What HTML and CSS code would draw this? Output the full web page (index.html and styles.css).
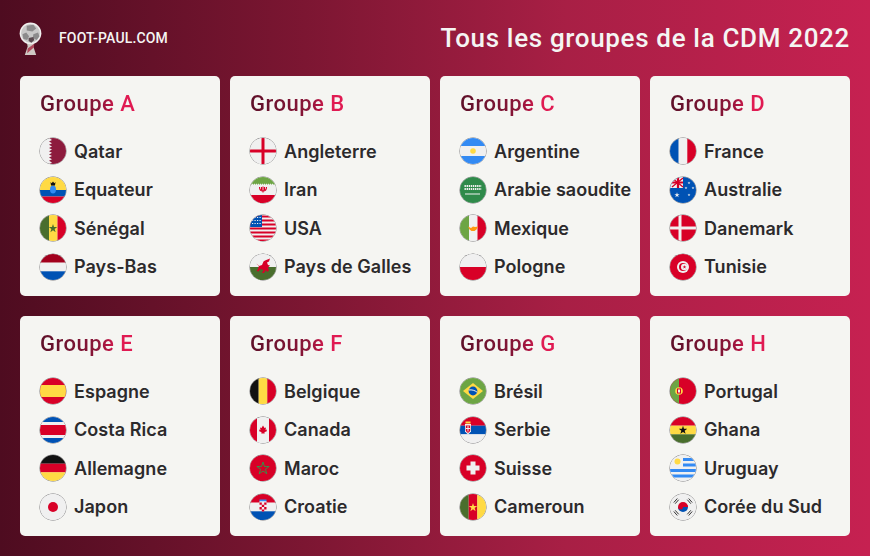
FILE: index.html
```html
<!DOCTYPE html>
<html lang="fr">
	<head>
		<title>Tous les groupes de la CDM 2022</title>
		<meta charset="UTF-8">
		<meta content="width=device-width,initial-scale=1.0" name="viewport">
		<link rel="stylesheet" href="styles.css">
	</head>
	<body>
		<svg class="sprite" aria-hidden="true"><defs>
			<polygon id="star" points="0,-1 .225,-.309 .951,-.309 .363,.118 .588,.809 0,.382 -.588,.809 -.363,.118 -.951,-.309 -.225,-.309"/>
		</defs></svg>
		<div id="page">
			<header class="top">
				<div class="brand">
					<svg class="logo" viewBox="0 0 24 36">
						<path d="M8 21h8l-1 5 3 9H6l3-9z" fill="#cfc9c4"/>
						<path d="M9 28l7-5-.5 4-7 6z" fill="#b04a5c"/>
						<circle cx="12" cy="12" r="11.500" fill="#f1f0ef"/>
						<circle cx="12" cy="12" r="10" fill="#c9c8c8"/>
						<path d="M8 4l7-1 3 4-4 3-6-1zM3.500 13l4-2 3 4-2 4-4-1zM15 13l5-2 1.500 4-3 4-4-2z" fill="#8c8b8c"/>
						<path d="M10 17l5-1 1 3-3 3-3-2z" fill="#5a4a50"/>
					</svg>
					<span class="site">FOOT-PAUL.COM</span>
				</div>
				<h1 class="headline">Tous les groupes de la CDM 2022</h1>
			</header>
			<main class="groups">
				<section class="card">
					<h2 class="title">Groupe A</h2>
					<ul class="teams">
						<li class="team"><svg class="flag" viewBox="0 0 26 26"><rect width="26" height="26" fill="#f0f0f0"/><path d="M9 0h17v26H9l3-1.600-3-1.600 3-1.600-3-1.600 3-1.600-3-1.600 3-1.600-3-1.600 3-1.600-3-1.600 3-1.600-3-1.600 3-1.600-3-1.600 3-1.600z" fill="#8d1b3d"/></svg>Qatar</li>
						<li class="team"><svg class="flag" viewBox="0 0 26 26"><rect width="26" height="13" fill="#ffda44"/><rect y="13" width="26" height="6.500" fill="#0052b4"/><rect y="19.500" width="26" height="6.500" fill="#d80027"/><ellipse cx="13" cy="12.500" rx="3" ry="4" fill="#338af3"/><path d="M10.500 5l1.200 1.200L13 4.500l1.300 1.700L15.500 5 15 8.500h-4z" fill="#111"/></svg>Equateur</li>
						<li class="team"><svg class="flag" viewBox="0 0 26 26"><rect width="9" height="26" fill="#496e2d"/><rect x="9" width="8.500" height="26" fill="#ffda44"/><rect x="17.500" width="8.500" height="26" fill="#d80027"/><use href="#star" transform="translate(13 13.500) scale(4.500)" fill="#496e2d"/></svg>Sénégal</li>
						<li class="team"><svg class="flag" viewBox="0 0 26 26"><rect width="26" height="8.700" fill="#a2001d"/><rect y="8.700" width="26" height="8.700" fill="#f0f0f0"/><rect y="17.300" width="26" height="8.700" fill="#0052b4"/></svg>Pays-Bas</li>
					</ul>
				</section>
				<section class="card">
					<h2 class="title">Groupe B</h2>
					<ul class="teams">
						<li class="team"><svg class="flag" viewBox="0 0 26 26"><rect width="26" height="26" fill="#f0f0f0"/><path d="M11.500 0h3v11.500H26v3H14.500V26h-3V14.500H0v-3h11.500z" fill="#d80027"/></svg>Angleterre</li>
						<li class="team"><svg class="flag" viewBox="0 0 26 26"><rect width="26" height="26" fill="#f0f0f0"/><rect width="26" height="7.500" fill="#6da544"/><rect y="18" width="26" height="8" fill="#d80027"/><path d="M2 7.500h22" stroke="#f0f0f0" stroke-width="1.500" stroke-dasharray="1 1"/><path d="M9.500 10c0 3 1.500 4 3.500 4s3.500-1 3.500-4M11.500 10v3M14.500 10v3M13 9.500v6" fill="none" stroke="#d80027" stroke-width="1.100"/></svg>Iran</li>
						<li class="team"><svg class="flag" viewBox="0 0 26 26"><rect width="26" height="26" fill="#f0f0f0"/><path d="M0 1.500h26M0 5.500h26M0 9.500h26M0 13.500h26M0 17.500h26M0 21.500h26M0 25.500h26" stroke="#d80027" stroke-width="2"/><rect width="12" height="12" fill="#0052b4"/><path d="M2 2.500h9M2 5.500h9M2 8.500h9" stroke="#f0f0f0" stroke-width="1.200" stroke-dasharray="1.200 1.300"/></svg>USA</li>
						<li class="team"><svg class="flag" viewBox="0 0 26 26"><rect width="26" height="13" fill="#f0f0f0"/><rect y="13" width="26" height="13" fill="#496e2d"/><path d="M6 9.500l3 2.500 3-1 1.500-3.500L15 6.500l5-2-1 3-2 1 1 2.500 2 .5-2 2 1 3-2 1.500-1-2-2 3h-2l1.500-3-3-1-2 2.500-2-.5 1.500-2 1-3.500z" fill="#d80027"/></svg>Pays de Galles</li>
					</ul>
				</section>
				<section class="card">
					<h2 class="title">Groupe C</h2>
					<ul class="teams">
						<li class="team"><svg class="flag" viewBox="0 0 26 26"><rect width="26" height="26" fill="#f0f0f0"/><rect width="26" height="8" fill="#338af3"/><rect y="18" width="26" height="8" fill="#338af3"/><circle cx="13" cy="13" r="2.800" fill="#ffda44"/></svg>Argentine</li>
						<li class="team"><svg class="flag" viewBox="0 0 26 26"><rect width="26" height="26" fill="#2f8a4a"/><path d="M4.500 9h17M4.500 12h17" stroke="#f0f0f0" stroke-width="2.200" stroke-dasharray="1.400 .7"/><path d="M5 17h15" stroke="#f0f0f0" stroke-width="1"/></svg>Arabie saoudite</li>
						<li class="team"><svg class="flag" viewBox="0 0 26 26"><rect width="9" height="26" fill="#6da544"/><rect x="9" width="8.500" height="26" fill="#f0f0f0"/><rect x="17.500" width="8.500" height="26" fill="#d80027"/><path d="M8 11.500l3 1.500 2-1.500 2 .5 3-.5-1.500 3-2 1.500h-3l-2-1.500z" fill="#ff9811"/></svg>Mexique</li>
						<li class="team"><svg class="flag" viewBox="0 0 26 26"><rect width="26" height="13" fill="#f0f0f0"/><rect y="13" width="26" height="13" fill="#d80027"/></svg>Pologne</li>
					</ul>
				</section>
				<section class="card">
					<h2 class="title">Groupe D</h2>
					<ul class="teams">
						<li class="team"><svg class="flag" viewBox="0 0 26 26"><rect width="8.700" height="26" fill="#0052b4"/><rect x="8.700" width="8.700" height="26" fill="#f0f0f0"/><rect x="17.300" width="8.700" height="26" fill="#d80027"/></svg>France</li>
						<li class="team"><svg class="flag" viewBox="0 0 26 26"><rect width="26" height="26" fill="#0052b4"/><rect width="13" height="11" fill="#f0f0f0"/><path d="M2 1l11 9M13 1L2 10" stroke="#d80027" stroke-width="1.300"/><path d="M8 0v11M0 5.500h13" stroke="#d80027" stroke-width="2.200"/><use href="#star" transform="translate(7 18) scale(2.800)" fill="#f0f0f0"/><use href="#star" transform="translate(19 6) scale(1.500)" fill="#f0f0f0"/><use href="#star" transform="translate(23 11) scale(1.500)" fill="#f0f0f0"/><use href="#star" transform="translate(16 11) scale(1.500)" fill="#f0f0f0"/><use href="#star" transform="translate(19 18) scale(1.500)" fill="#f0f0f0"/></svg>Australie</li>
						<li class="team"><svg class="flag" viewBox="0 0 26 26"><rect width="26" height="26" fill="#d80027"/><path d="M10 0v26M0 13h26" stroke="#f0f0f0" stroke-width="3"/></svg>Danemark</li>
						<li class="team"><svg class="flag" viewBox="0 0 26 26"><rect width="26" height="26" fill="#d80027"/><circle cx="13" cy="13" r="6" fill="#f0f0f0"/><circle cx="13" cy="13" r="4" fill="#d80027"/><circle cx="14.200" cy="13" r="3.200" fill="#f0f0f0"/><use href="#star" transform="translate(14.500 13) scale(2)" fill="#d80027"/></svg>Tunisie</li>
					</ul>
				</section>
				<section class="card">
					<h2 class="title">Groupe E</h2>
					<ul class="teams">
						<li class="team"><svg class="flag" viewBox="0 0 26 26"><rect width="26" height="26" fill="#d80027"/><rect y="7" width="26" height="12" fill="#ffda44"/></svg>Espagne</li>
						<li class="team"><svg class="flag" viewBox="0 0 26 26"><rect width="26" height="26" fill="#f0f0f0"/><rect width="26" height="5" fill="#0052b4"/><rect y="8" width="26" height="10" fill="#d80027"/><rect y="21" width="26" height="5" fill="#0052b4"/></svg>Costa Rica</li>
						<li class="team"><svg class="flag" viewBox="0 0 26 26"><rect width="26" height="8.700" fill="#111"/><rect y="8.700" width="26" height="8.700" fill="#d80027"/><rect y="17.300" width="26" height="8.700" fill="#ffda44"/></svg>Allemagne</li>
						<li class="team"><svg class="flag" viewBox="0 0 26 26"><rect width="26" height="26" fill="#f0f0f0"/><circle cx="13" cy="13" r="5" fill="#d80027"/></svg>Japon</li>
					</ul>
				</section>
				<section class="card">
					<h2 class="title">Groupe F</h2>
					<ul class="teams">
						<li class="team"><svg class="flag" viewBox="0 0 26 26"><rect width="8.700" height="26" fill="#111"/><rect x="8.700" width="8.700" height="26" fill="#ffda44"/><rect x="17.300" width="8.700" height="26" fill="#d80027"/></svg>Belgique</li>
						<li class="team"><svg class="flag" viewBox="0 0 26 26"><rect width="26" height="26" fill="#f0f0f0"/><rect width="7" height="26" fill="#d80027"/><rect x="19" width="7" height="26" fill="#d80027"/><path d="M13 8.500l1.500 2.500 1.500-.5-.5 2.500 1.500-.5-.5 2-2 .5.200 1.500h-3.400l.2-1.500-2-.5-.5-2 1.500.5-.5-2.500 1.500.5z" fill="#d80027"/></svg>Canada</li>
						<li class="team"><svg class="flag" viewBox="0 0 26 26"><rect width="26" height="26" fill="#d80027"/><use href="#star" transform="translate(13 13.500) scale(6.500)" fill="none" stroke="#2a9a4a" stroke-width=".14"/></svg>Maroc</li>
						<li class="team"><svg class="flag" viewBox="0 0 26 26"><rect width="26" height="8.700" fill="#d80027"/><rect y="8.700" width="26" height="8.700" fill="#f0f0f0"/><rect y="17.300" width="26" height="8.700" fill="#0052b4"/><path d="M9.500 7h7v7.500l-3.500 3-3.500-3z" fill="#f0f0f0"/><path d="M9.500 8.500h2.300v2.300H9.500zM14.200 8.500h2.300v2.300h-2.300zM11.800 10.800h2.400v2.300h-2.400zM9.500 13.100h2.300v2.300H9.500zM14.200 13.100h2.300v2.300h-2.300zM11.800 15.400h2.400v2h-2.400z" fill="#d80027"/><path d="M9.500 5.500h7v1.800h-7z" fill="#338af3"/></svg>Croatie</li>
					</ul>
				</section>
				<section class="card">
					<h2 class="title">Groupe G</h2>
					<ul class="teams">
						<li class="team"><svg class="flag" viewBox="0 0 26 26"><rect width="26" height="26" fill="#6da544"/><path d="M13 5l10 8-10 8-10-8z" fill="#ffda44"/><circle cx="13" cy="13" r="4.400" fill="#0052b4"/><path d="M8.800 12c3-.5 6 .3 8.300 2.200" fill="none" stroke="#f0f0f0" stroke-width="1"/></svg>Brésil</li>
						<li class="team"><svg class="flag" viewBox="0 0 26 26"><rect width="26" height="8.700" fill="#d80027"/><rect y="8.700" width="26" height="8.700" fill="#0052b4"/><rect y="17.300" width="26" height="8.700" fill="#f0f0f0"/><path d="M5 7h6v7.500l-3 3-3-3z" fill="#f0f0f0"/><path d="M5.800 8.500h4.400v5.500L8 16l-2.200-2z" fill="#d80027"/><path d="M8 9v5.500M6 11.500h4" stroke="#f0f0f0" stroke-width="1"/><path d="M5.500 4.500h5V6.500h-5z" fill="#ffda44"/></svg>Serbie</li>
						<li class="team"><svg class="flag" viewBox="0 0 26 26"><rect width="26" height="26" fill="#d80027"/><path d="M10.500 6.500h5v4h4v5h-4v4h-5v-4h-4v-5h4z" fill="#f0f0f0"/></svg>Suisse</li>
						<li class="team"><svg class="flag" viewBox="0 0 26 26"><rect width="8.700" height="26" fill="#496e2d"/><rect x="8.700" width="8.700" height="26" fill="#d80027"/><rect x="17.300" width="8.700" height="26" fill="#ffda44"/><use href="#star" transform="translate(13 13.500) scale(4.500)" fill="#ffda44"/></svg>Cameroun</li>
					</ul>
				</section>
				<section class="card">
					<h2 class="title">Groupe H</h2>
					<ul class="teams">
						<li class="team"><svg class="flag" viewBox="0 0 26 26"><rect width="26" height="26" fill="#d80027"/><rect width="9" height="26" fill="#6da544"/><circle cx="9" cy="13" r="3.800" fill="#ffda44"/><rect x="7" y="10.500" width="4" height="5" fill="#d80027"/><rect x="8" y="11.500" width="2" height="3" fill="#f0f0f0"/></svg>Portugal</li>
						<li class="team"><svg class="flag" viewBox="0 0 26 26"><rect width="26" height="8.700" fill="#d80027"/><rect y="8.700" width="26" height="8.700" fill="#ffda44"/><rect y="17.300" width="26" height="8.700" fill="#496e2d"/><use href="#star" transform="translate(13 13.200) scale(4.500)" fill="#111"/></svg>Ghana</li>
						<li class="team"><svg class="flag" viewBox="0 0 26 26"><rect width="26" height="26" fill="#f0f0f0"/><path d="M13 4.500h13M13 10h13M0 15.500h26M0 21h26" stroke="#338af3" stroke-width="2.800"/><circle cx="7.500" cy="6.500" r="3" fill="#ffda44"/></svg>Uruguay</li>
						<li class="team"><svg class="flag" viewBox="0 0 26 26"><rect width="26" height="26" fill="#f0f0f0"/><path d="M8 13a5 5 0 0 1 10 0z" fill="#d80027"/><path d="M8 13a5 5 0 0 0 10 0z" fill="#0052b4"/><path d="M8 13a2.500 2.500 0 0 0 5 0 2.500 2.500 0 0 1 5 0z" fill="#d80027"/><path d="M3.800 8.500l3.500-4M5.200 9.700l3.500-4M18.700 4.500l3.500 4M17.300 5.700l3.500 4M3.800 17.500l3.500 4M5.200 16.300l3.500 4M18.700 21.500l3.500-4M17.300 20.300l3.500-4" stroke="#222" stroke-width=".9"/></svg>Corée du Sud</li>
					</ul>
				</section>
			</main>
		</div>
	</body>
</html>
```

FILE: styles.css
```css
*{box-sizing:border-box;}
html,body{margin:0;padding:0;}
.sprite{display:block;width:0;height:0;}
#page{width:870px;height:556px;padding:0 20px;overflow:hidden;background:linear-gradient(90deg,#4e0c20 0%,#7c1632 35%,#a81f45 65%,#c62151 100%);}
.top{display:flex;justify-content:space-between;align-items:center;height:76px;}
.brand{display:flex;align-items:center;gap:17px;}
.logo{display:block;width:23px;height:34px;margin:2px 0 0 -1px;}
.site{font:500 14px "Roboto",sans-serif;letter-spacing:.15px;color:#f5f5f3;}
.headline{margin:0;font:500 26px "Roboto",sans-serif;letter-spacing:.66px;color:#f5f5f3;}
.groups{display:grid;grid-template-columns:repeat(4,200px);grid-auto-rows:220px;gap:20px 10px;}
.card{padding:14px 0 0 20px;background:#f5f5f2;border-radius:5px;}
.title{display:inline-block;margin:0;font:500 22px/28px "Roboto",sans-serif;letter-spacing:.5px;color:transparent;background:linear-gradient(90deg,#5e1029 0%,#8a1538 62%,#e01a52 85%);-webkit-background-clip:text;background-clip:text;}
.teams{display:grid;grid-auto-rows:38.5px;margin:14px 0 0;padding:0;list-style:none;}
.team{display:flex;align-items:center;gap:8px;font:600 18px "Inter",sans-serif;letter-spacing:.05px;color:#2c2a2c;white-space:nowrap;}
.flag{display:block;flex:none;width:26px;height:26px;border-radius:50%;box-shadow:0 0 0 .5px #77767a;}
```
